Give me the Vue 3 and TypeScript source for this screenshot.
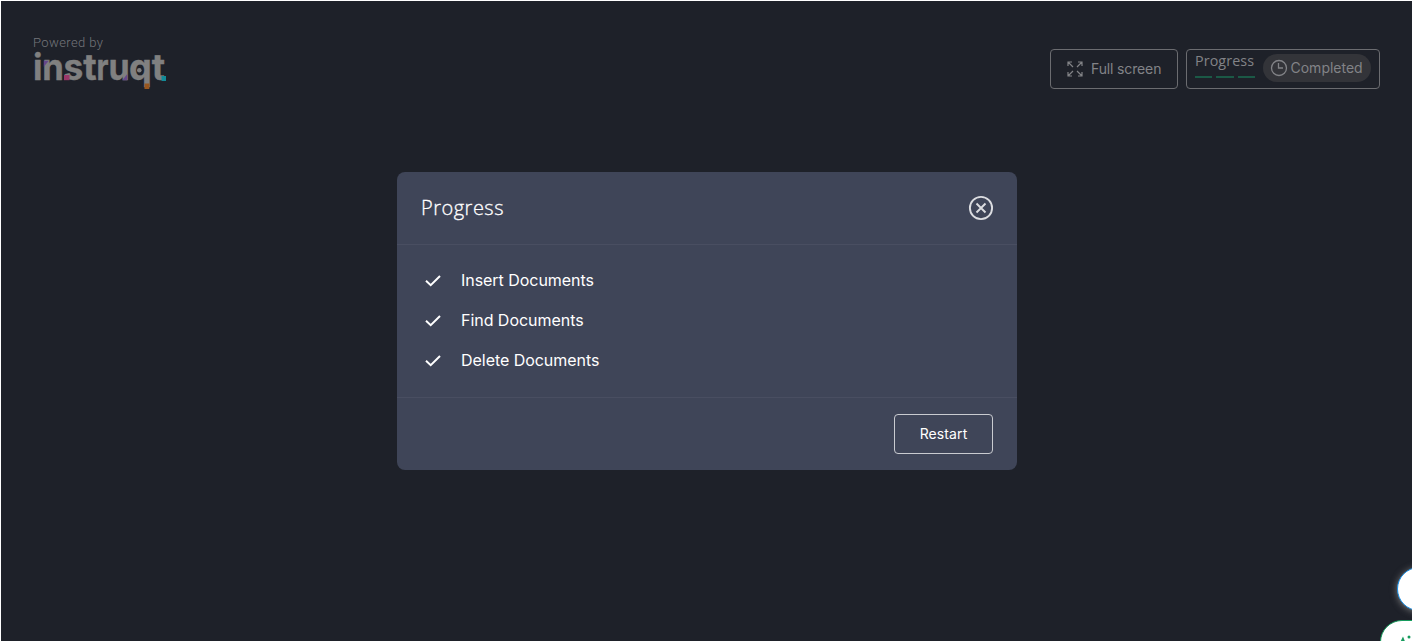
<script setup lang="ts">
interface Glyph { ch: string; x: number; w: number }
const steps: string[] = ['Insert Documents', 'Find Documents', 'Delete Documents']
const wordmark: Glyph[] = [
  { ch: 'i', x: 32.4, w: 9.5 },
  { ch: 'n', x: 41.8, w: 21.6 },
  { ch: 's', x: 63, w: 19.8 },
  { ch: 't', x: 82.8, w: 13.4 },
  { ch: 'r', x: 96, w: 12 },
  { ch: 'u', x: 108, w: 21.2 },
  { ch: 'q', x: 128.400, w: 22.8 },
  { ch: 't', x: 151.2, w: 13.4 },
]
</script>

<template>
  <main class="page">
    <header class="top">
      <div class="brand">
        <span class="powered">Powered by</span>
        <svg class="logo" width="140" height="42" viewBox="30 50 140 42">
          <text v-for="(g, i) in wordmark" :key="i" :x="g.x + 0.5" y="80.300" :textLength="g.w" lengthAdjust="spacingAndGlyphs">{{ g.ch }}</text>
          <circle cx="139.300" cy="70.300" r="2.300" fill="#808080" />
          <path d="M43.800 60.700h5l-5 6z" fill="#65478a" />
          <path d="M64 75h5.500v5.200H64z" fill="#9a3768" />
          <path d="M127.300 74v6.200h-5z" fill="#65478a" />
          <path d="M144.500 83.500h4.800v5.500h-4.800z" fill="#98561f" />
          <path d="M161.500 76h4.500v5h-4.500z" fill="#138b98" />
        </svg>
      </div>
      <div class="actions">
        <button class="outline full">
          <svg width="16" height="16" viewBox="0 0 16 16" fill="none" stroke="currentColor" stroke-width="1.200">
            <path d="M1 5V1h4M1 1l5 5M11 1h4v4M15 1l-5 5M1 11v4h4M1 15l5-5M15 11v4h-4M15 15l-5-5" />
          </svg>
          <span class="full-text">Full screen</span>
        </button>
        <button class="outline status">
          <span class="track">
            <span class="track-text">Progress</span>
            <span class="bars"><i v-for="s in steps" :key="s" /></span>
          </span>
          <span class="pill">
            <svg width="18" height="18" viewBox="0 0 18 18" fill="none" stroke="currentColor" stroke-width="1.300">
              <circle cx="9" cy="9" r="7.500" /><path d="M8.500 4v5h4.500" />
            </svg>
            <span class="pill-text">Completed</span>
          </span>
        </button>
      </div>
    </header>

    <section class="modal">
      <div class="head">
        <h1><span class="title">Progress</span></h1>
        <svg width="26" height="26" viewBox="0 0 26 26" fill="none" stroke="#dcdde1" stroke-width="1.900">
          <circle cx="13" cy="13" r="11.100" /><path d="M8.500 8.500l9 9M17.500 8.500l-9 9" />
        </svg>
      </div>
      <ul>
        <li v-for="s in steps" :key="s">
          <svg width="16" height="12" viewBox="0 0 16 12" fill="none" stroke="#fff" stroke-width="2"><path d="M1 5.800l4.700 4.400L15 1" /></svg>
          <span class="step">{{ s }}</span>
        </li>
      </ul>
      <div class="foot"><button class="restart"><span>Restart</span></button></div>
    </section>

    <div class="bubble blue"></div>
    <div class="bubble green">
      <svg width="31" height="22" viewBox="0 0 31 22" fill="#169b5d">
        <path d="M22 15.500l1.800 4.500h-4z" /><circle cx="28" cy="16" r="1.500" />
      </svg>
    </div>
  </main>
</template>

<style>
body { background: #fff; overflow: hidden; }
</style>

<style scoped>
* { box-sizing: border-box; }
.page { position: relative; width: 1411px; height: 640px; margin: 1px 0 1px 1px; overflow: hidden; background: #1e2129; font-family: Inter, "Liberation Sans", sans-serif; display: flex; flex-direction: column; }
.top { height: 171px; flex: none; display: flex; justify-content: space-between; padding: 34px 32px 0; }
.brand { display: flex; flex-direction: column; }
.powered { height: 15px; line-height: 15px; font-family: Roboto, sans-serif; font-weight: 300; font-size: 13px; letter-spacing: .4px; color: #74767b; }
.logo { display: block; margin-left: -3px; overflow: visible; }
.logo text { font: 650 36px Inter, sans-serif; fill: #808080; stroke: #808080; stroke-width: .4px; }
button { font: inherit; background: none; margin: 0; padding: 0; border-radius: 4px; display: flex; align-items: center; white-space: nowrap; }
.actions { display: flex; gap: 8px; padding-top: 14px; }
.outline { height: 40px; border: 1px solid #6b6c70; color: #828387; }
.full { width: 128px; padding-left: 16px; gap: 8px; }
.full-text { font-size: 14px; letter-spacing: -.14px; padding-bottom: 2px; }
.status { width: 194px; padding-left: 8px; gap: 8px; }
.track { width: 60px; height: 38px; padding-top: 2px; display: flex; flex-direction: column; align-items: flex-start; }
.track-text { font-family: "Open Sans", sans-serif; font-size: 14.300px; letter-spacing: .1px; line-height: 17px; }
.bars { display: flex; gap: 4px; margin-top: 7px; }
.bars i { width: 17.300px; height: 2px; background: #1b5946; }
.pill { height: 28px; width: 108px; margin-top: -2px; padding-left: 7px; border-radius: 14px; background: #333439; display: flex; align-items: center; gap: 2.500px; }
.pill-text { font-size: 14px; letter-spacing: 0; padding-bottom: 2px; }
.modal { width: 620px; height: 298px; margin-left: 396px; flex: none; border-radius: 8px; background: #3f4558; color: #fff; }
.head { height: 73px; padding: 0 23px 0 24px; border-bottom: 1px solid #494e61; display: flex; align-items: center; justify-content: space-between; }
h1 { margin: 0; font: 300 20px/24px "Open Sans", sans-serif; letter-spacing: .5px; -webkit-text-stroke: .3px #fff; }
ul { list-style: none; margin: 0; padding: 16px 28px; height: 153px; border-bottom: 1px solid #494e61; }
li { height: 40px; display: flex; align-items: center; gap: 20px; }
.step { font-size: 16px; letter-spacing: -.04px; padding-bottom: 2px; }
.foot { height: 72px; display: flex; justify-content: flex-end; align-items: center; padding-right: 24px; }
.restart { width: 99px; height: 40px; border: 1px solid #c9cbd0; color: #fff; font-size: 14px; justify-content: center; }
.restart span { letter-spacing: .1px; padding-bottom: 2px; }
.bubble { position: absolute; background: #fff; }
.blue { left: 1396px; top: 566px; width: 44px; height: 44px; border: 1px solid #198fe6; border-radius: 50%; box-shadow: 0 1px 7px #9b9b9bb0; }
.green { left: 1379px; top: 619px; width: 80px; height: 44px; border: 1px solid #169b5d; border-radius: 22px; }
.green svg { display: block; }
</style>
